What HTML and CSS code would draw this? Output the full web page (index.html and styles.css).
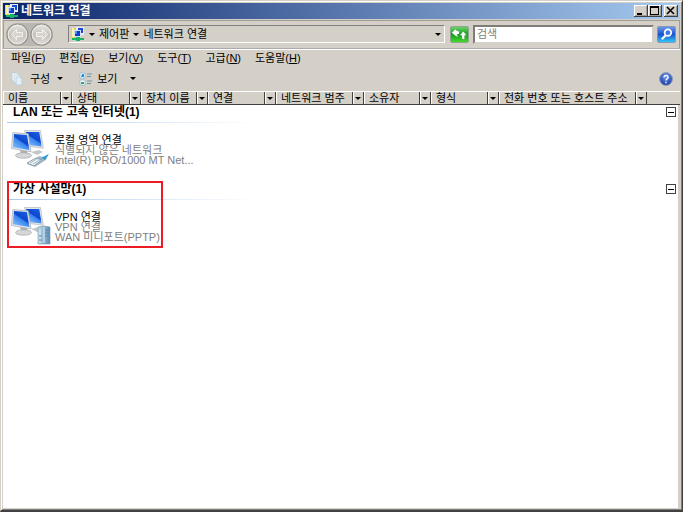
FILE: index.html
```html
<!DOCTYPE html>
<html lang="ko">
<head>
<meta charset="utf-8">
<title>네트워크 연결</title>
<link rel="stylesheet" href="styles.css">
</head>
<body>
<svg class="defs" aria-hidden="true">
  <defs>
    <linearGradient id="screen" x1=".1" y1="1" x2=".8" y2="0"><stop offset="0" stop-color="#8cc4ff"/><stop offset=".5" stop-color="#3a86ee"/><stop offset=".58" stop-color="#0b47cf"/><stop offset="1" stop-color="#1c5fe0"/></linearGradient>
    <linearGradient id="tower" x1="0" y1="0" x2="1" y2="0"><stop offset="0" stop-color="#c9deec"/><stop offset=".5" stop-color="#8db3cf"/><stop offset="1" stop-color="#5f8cb2"/></linearGradient>
    <radialGradient id="help" cx=".5" cy=".3" r=".7"><stop offset="0" stop-color="#6d98ec"/><stop offset="1" stop-color="#1539a4"/></radialGradient>
    <linearGradient id="disc" x1="0" y1="0" x2="0" y2="1"><stop offset="0" stop-color="#e9e7e3"/><stop offset=".5" stop-color="#c6c3bd"/><stop offset="1" stop-color="#dedbd6"/></linearGradient>
    <symbol id="net" viewBox="0 0 14 14">
      <path d="M0 1h6v10H0z" fill="#e8d255"/><path d="M1 1h2v9H1z" fill="#fff3a0"/>
      <path d="M5 0h8v8H5z" fill="#e8eef8"/><path d="M7 1h5v5H7z" fill="#1b48d8"/>
      <path d="M3 3h7v7H3z" fill="#d5e2f5"/><path d="M4 4h5v5H4z" fill="#123ccc"/><path d="M4 4h2v3H4z" fill="#4a8cf5"/>
      <path d="M5 10h4v1h4v2H9v1H5v-1H1v-2h4z" fill="#16b565"/>
    </symbol>
    <symbol id="monitors" viewBox="0 0 36 30">
      <path d="M20 22l8-2 4 2-6 3z" fill="#c5c8ca"/>
      <path d="M13.500 .6h16l2.800 17.600-14.300-1.800z" fill="#e6e9eb" stroke="#aeb5bb" stroke-width=".7"/>
      <path d="M15 1.900h13.300l2.300 14.600-13-1.600z" fill="url(#screen)"/>
      <path d="M9 20l7 1 .5 4-6 .5z" fill="#aeb1b3"/>
      <ellipse cx="12.500" cy="25.500" rx="8" ry="2.700" fill="#d5d7d8" stroke="#a3a7aa" stroke-width=".7"/>
      <path d="M1.800 2.600l15.400 1.200 2.800 18-19.500-3.300z" fill="#e6eaed" stroke="#a3abb3" stroke-width=".7"/>
      <path d="M3 4l13 1 2.400 15-16.500-2.800z" fill="url(#screen)"/>
    </symbol>
  </defs>
</svg>
<div class="window">
  <header class="titlebar">
    <svg class="icon16"><use href="#net"/></svg>
    <h1>네트워크 연결</h1>
    <div class="controls">
      <button aria-label="최소화"><svg viewBox="0 0 14 12"><path d="M3 8h5v2H3z"/></svg></button>
      <button aria-label="최대화"><svg viewBox="0 0 14 12"><path d="M2 1h9v9H2zM3 3v6h7V3z" fill-rule="evenodd"/></svg></button>
      <button class="close" aria-label="닫기"><svg viewBox="0 0 14 12"><path d="M3 2l7 7M10 2l-7 7" stroke="#000" stroke-width="1.600"/></svg></button>
    </div>
  </header>
  <nav class="navbar">
    <div class="history">
      <button aria-label="뒤로"><svg viewBox="0 0 23 23"><circle cx="11.500" cy="11.500" r="10.500" fill="url(#disc)" stroke="#96948f" stroke-width="1.200"/><circle cx="11.500" cy="11.500" r="9.300" fill="none" stroke="#efede9"/><path d="M5.500 11.500l5-5v3h6v4h-6v3z" fill="#d8d5cf" stroke="#f8f6f2" stroke-width=".9"/></svg></button>
      <button aria-label="앞으로"><svg viewBox="0 0 23 23"><circle cx="11.500" cy="11.500" r="10.500" fill="url(#disc)" stroke="#96948f" stroke-width="1.200"/><circle cx="11.500" cy="11.500" r="9.300" fill="none" stroke="#efede9"/><path d="M17.500 11.500l-5-5v3h-6v4h6v3z" fill="#d8d5cf" stroke="#f8f6f2" stroke-width=".9"/></svg></button>
    </div>
    <div class="address">
      <svg class="icon16"><use href="#net"/></svg>
      <i class="arrow"></i><a href="#">제어판</a><i class="arrow"></i><a href="#">네트워크 연결</a>
      <button class="drop" aria-label="이전 위치"><i class="arrow"></i></button>
    </div>
    <button class="refresh" aria-label="새로 고침"><svg viewBox="0 0 18 16"><path d="M1 6.500l4-4 4 4H6.500c0 2 .5 3 2 4-3 0-4.500-1.500-4.500-4z" fill="#fff" stroke="#187a28" stroke-width=".4"/><path d="M1 6l4-3.500v2h3.500v3H5v2z" fill="#fff"/><path d="M17 9l-4-4.500L9 9h2.500v4h3V9z" fill="#fff" stroke="#187a28" stroke-width=".4"/></svg></button>
    <input class="search" type="text" placeholder="검색" aria-label="검색">
    <button class="find" aria-label="찾기"><svg viewBox="0 0 18 16"><circle cx="10.500" cy="6" r="3.500" fill="#3c7ae8" stroke="#fff" stroke-width="1.800"/><path d="M8 9l-4 4" stroke="#fff" stroke-width="2.400"/></svg></button>
  </nav>
  <div class="menubar">
    <button>파일(<u>F</u>)</button><button>편집(<u>E</u>)</button><button>보기(<u>V</u>)</button><button>도구(<u>T</u>)</button><button>고급(<u>N</u>)</button><button>도움말(<u>H</u>)</button>
  </div>
  <div class="toolbar">
    <button class="tool"><svg viewBox="0 0 14 14"><g stroke="#b3c8d5" stroke-width=".8"><path d="M2 1h5l2 2v6H2z" fill="#fff"/><path d="M4 3h5l2 2v6H4z" fill="#f1f8fc"/><path d="M6 5h4l2 2v6H6z" fill="#e2eff6"/></g></svg>구성<i class="arrow"></i></button>
    <button class="tool view"><svg viewBox="0 0 14 14"><path d="M1 1h5v5H1zM1 8h5v5H1z" fill="#fff" stroke="#8eb8cc" stroke-width=".8"/><path d="M3 2h2v3H2z" fill="#238fd8"/><path d="M2 10h3v2H2z" fill="#35a657"/><path d="M8 2h5M8 4.500h4M8 9h5M8 11.500h4" stroke="#6d97ac"/></svg>보기<i class="arrow"></i></button>
    <button class="help" aria-label="도움말"><svg viewBox="0 0 14 14"><circle cx="7" cy="7" r="6.400" fill="url(#help)" stroke="#8e9bb7"/><path d="M5 5.600c0-3 4.300-2.800 4 0C8.800 7 7 6.800 7 8.500M7 9.700v1.500" fill="none" stroke="#fff" stroke-width="1.400"/></svg></button>
  </div>
  <div class="columns">
    <button>이름<span><i class="arrow"></i></span></button><button>상태<span><i class="arrow"></i></span></button><button>장치 이름<span><i class="arrow"></i></span></button><button>연결<span><i class="arrow"></i></span></button><button>네트워크 범주<span><i class="arrow"></i></span></button><button>소유자<span><i class="arrow"></i></span></button><button>형식<span><i class="arrow"></i></span></button><button>전화 번호 또는 호스트 주소<span><i class="arrow"></i></span></button>
  </div>
  <main class="list">
    <section>
      <div class="group"><h2>LAN 또는 고속 인터넷(1)</h2><button class="fold" aria-label="접기"></button></div>
      <a class="item" href="#">
        <svg viewBox="0 0 40 40"><use href="#monitors" width="36" height="30"/><path d="M16 34l12-8 5 1 4-3-2 6-11 7z" fill="#a9bdc9"/><path d="M16 33l9-5 6 2-8 6z" fill="#edf3f5" stroke="#758b9a" stroke-width=".8"/><path d="M19 33l7-4M22 34l7-4M24 35l6-4" stroke="#8ea5b2" stroke-width=".7"/><path d="M30 28l8-4-4 6z" fill="#2f9bd7"/></svg>
        <span class="text"><b>로컬 영역 연결</b><span>식별되지 않은 네트워크</span><span>Intel(R) PRO/1000 MT Net...</span></span>
      </a>
    </section>
    <section class="marked">
      <div class="group"><h2>가상 사설망(1)</h2><button class="fold" aria-label="접기"></button></div>
      <a class="item" href="#">
        <svg viewBox="0 0 40 40"><use href="#monitors" width="36" height="30"/><path d="M27 20l6-1 6 1v17H27z" fill="url(#tower)" stroke="#7195b0" stroke-width=".6"/><path d="M29 22v14M33 20v16" stroke="#ddecf5"/><path d="M34 23h4M34 26h4M34 29h4M28 29h3M28 33h3" stroke="#5b88aa"/></svg>
        <span class="text"><b>VPN 연결</b><span>VPN 연결</span><span>WAN 미니포트(PPTP)</span></span>
      </a>
    </section>
  </main>
</div>
</body>
</html>
```
FILE: styles.css
```css
*, *::after { box-sizing: border-box; }
body {
  margin: 0;
  background: #d4d0c8;
  color: #000;
  font: 11px/14px "Liberation Sans", "Noto Sans CJK KR", sans-serif;
}
button { margin: 0; padding: 0; border: 0; background: none; color: inherit; font: inherit; white-space: nowrap; }
a { color: inherit; text-decoration: none; }
svg { display: block; flex: none; }
.defs { position: absolute; width: 0; height: 0; }
.window {
  display: flex;
  flex-direction: column;
  min-height: 100vh;
  padding: 2px;
  border: 1px solid #d4d0c8;
  border-right-color: #404040;
  border-bottom: 2px solid #404040;
  box-shadow: inset 1px 1px #fff, inset -1px -1px #808080;
}
.icon16 { width: 14px; height: 14px; }
.arrow { width: 0; height: 0; border: 3px solid transparent; border-top-color: #000; border-bottom: 0; }

.titlebar {
  display: flex;
  align-items: center;
  gap: 2px;
  height: 16px;
  padding: 0 2px;
  background: linear-gradient(90deg, #0a246a, #a6caf0);
}
.titlebar h1 { margin: 0; color: #fff; font-size: 12px; font-weight: 700; }
.controls { display: flex; margin-left: auto; }
.controls button {
  width: 14px;
  height: 12px;
  background: #d4d0c8;
  box-shadow: inset -1px -1px #404040, inset 1px 1px #fff, inset -2px -2px #a09d97;
}
.controls .close { margin-left: 2px; }

.navbar {
  display: flex;
  align-items: center;
  height: 31px;
  padding: 0 4px 0 3px;
  border-top: 1px solid #d4d0c8;
  border-bottom: 2px groove #fff;
  box-shadow: inset 0 1px #a09d97, inset 1px 0 #a09d97, inset -1px 0 #a09d97;
}
.history { display: flex; border-radius: 12px; background: #bbb8b1; }
.history button { width: 23px; height: 23px; }
.history button + button { margin-left: 1px; }
.address {
  display: flex;
  flex: 1;
  align-items: center;
  gap: 4px;
  height: 18px;
  margin: 0 5px 0 15px;
  padding: 0 3px 0 2px;
  border: 1px solid #808080;
  border-right-color: #fff;
  border-bottom-color: #fff;
}
.drop { display: flex; margin-left: auto; }
.refresh, .find { width: 19px; height: 17px; border: 1px solid #8fa58c; border-radius: 2px; }
.refresh { background: linear-gradient(#6fcf6b, #12a01d 50%, #45d82c); }
.find { background: linear-gradient(#6b97e8, #1d52cc 50%, #31c7f5); border-color: #8796b5; }
.search {
  width: 181px;
  height: 19px;
  margin: 0 3px 0 4px;
  padding: 0 2px;
  border: 2px inset #d4d0c8;
  background: #fff;
  font: inherit;
}
.search::placeholder { color: #808080; opacity: 1; }

.menubar { display: flex; gap: 14px; height: 16px; padding: 0 8px; }
.toolbar { display: flex; align-items: center; height: 25px; padding: 0 7px; }
.tool { display: flex; align-items: center; gap: 6px; }
.tool svg { width: 14px; height: 14px; }
.tool .arrow { margin: 0 1px; }
.view { gap: 4px; margin-left: 15px; }
.view .arrow { margin-left: 8px; }
.help { margin-left: auto; }
.help svg { width: 14px; height: 14px; }

.columns {
  display: grid;
  grid-template-columns: 69px 69px 67px 68px 88px 67px 68px 148px;
  height: 14px;
  border-top: 1px solid #fff;
  border-bottom: 1px solid #404040;
}
.columns button {
  display: flex;
  align-items: center;
  justify-content: space-between;
  padding-left: 5px;
  border-right: 1px solid #404040;
  box-shadow: inset 1px 0 #fff;
  line-height: 12px;
}
.columns span {
  display: grid;
  place-items: center;
  width: 11px;
  height: 12px;
  border-left: 1px solid #404040;
  box-shadow: inset 1px 0 #fff;
}

.list { flex: 1; margin-right: 2px; background: #fff; }
.list section { height: 77px; }
.group {
  display: flex;
  align-items: center;
  justify-content: space-between;
  height: 18px;
  padding: 0 2px 4px 10px;
  background: linear-gradient(90deg, #a9c9ee, #fff 250px) 4px 100% / 100% 1px no-repeat;
}
.group h2 { margin: 0; font-size: 12px; line-height: 14px; }
.fold {
  width: 10px;
  height: 10px;
  border: 1px solid #404040;
  background: linear-gradient(#000, #000) center / 6px 1px no-repeat;
}
.item { display: flex; gap: 4px; padding: 7px 0 0 8px; }
.item svg { width: 40px; height: 40px; }
.text { display: flex; flex-direction: column; padding-top: 5px; color: #808080; line-height: 10px; white-space: nowrap; }
.text b { color: #000; font-weight: 400; }
.marked { position: relative; }
.marked::after {
  content: "";
  position: absolute;
  top: -1px;
  left: 4px;
  width: 156px;
  height: 67px;
  border: 2px solid #ed1c24;
  pointer-events: none;
}
```
